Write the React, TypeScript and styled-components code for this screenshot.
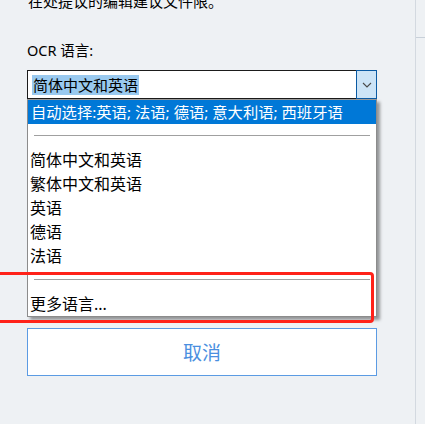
import React from "react";
import styled, { createGlobalStyle } from "styled-components";

const Global = createGlobalStyle`
  html, body {
    margin: 0;
    padding: 0;
    background: #eef1f4;
    overflow: hidden;
  }
  body {
    font-family: "Noto Sans", "Noto Sans CJK SC", sans-serif;
    color: #000;
  }
`;

const Page = styled.div`
  position: relative;
  display: flex;
  width: 425px;
  height: 424px;
  overflow: hidden;
  background: #eef1f4;
`;

const Panel = styled.div`
  box-sizing: border-box;
  width: 416px;
  height: 100%;
  padding: 0 38px 0 27px;
  border-right: 1px solid #d3d9e0;
  display: flex;
  flex-direction: column;
`;

const SideStrip = styled.div`
  flex: 1;
  display: flex;
  flex-direction: column;
`;

const SideRule = styled.div`
  margin-top: 37px;
  height: 1px;
  background: #c8d0d9;
`;

const Intro = styled.p`
  margin: -9px 0 0 1px;
  font-size: 15px;
  line-height: 20px;
  white-space: nowrap;
`;

const Label = styled.div`
  margin-top: 29px;
  font-size: 14.5px;
  line-height: 20px;
`;

const Combo = styled.div`
  margin-top: 10px;
  display: flex;
  height: 29px;
`;

const Field = styled.div`
  flex: 1;
  box-sizing: border-box;
  border: 1px solid #1b1b1b;
  border-right: none;
  background: #fff;
  display: flex;
  align-items: center;
  padding-left: 4px;
  font-size: 15px;
`;

const Selected = styled.span`
  background: #99c9ef;
  line-height: 20px;
  padding: 0 1px;
`;

const ArrowBtn = styled.div`
  box-sizing: border-box;
  width: 21px;
  border: 1px solid #0a5aa3;
  background: #cce4f7;
  display: flex;
  align-items: center;
  justify-content: center;
`;

const List = styled.div`
  box-sizing: border-box;
  border: 1px solid #8c8c8c;
  border-top-color: #9a9a9a;
  background: #fff;
  box-shadow: 3px 3px 3px rgba(0, 0, 0, 0.38);
  position: relative;
  z-index: 1;
`;

const Item = styled.div<{ $active?: boolean }>`
  height: 24px;
  line-height: 24px;
  padding-left: ${(p) => (p.$active ? "3px" : "2px")};
  font-size: ${(p) => (p.$active ? "15.3px" : "16px")};
  white-space: nowrap;
  background: ${(p) => (p.$active ? "#0078d7" : "transparent")};
  color: ${(p) => (p.$active ? "#fff" : "#000")};
`;

const SepRow = styled.div`
  height: 24px;
  display: flex;
  align-items: center;
  padding: 0 6px;
`;

const SepLine = styled.div`
  flex: 1;
  height: 1px;
  background: #a0a0a0;
  margin-top: -1px;
`;

const CancelBtn = styled.button`
  margin-top: 11px;
  box-sizing: border-box;
  width: 100%;
  height: 48px;
  border: 1px solid #5b9be3;
  background: #fff;
  color: #4a8fe0;
  font-family: "Noto Sans CJK SC", sans-serif;
  font-size: 19px;
  padding: 0 0 2px;
  cursor: pointer;
`;

const Annotation = styled.div`
  position: absolute;
  left: -6px;
  top: 272px;
  width: 380px;
  height: 51px;
  box-sizing: border-box;
  border: 3px solid #ff2219;
  border-radius: 4px;
  pointer-events: none;
  z-index: 2;
`;

const items = ["简体中文和英语", "繁体中文和英语", "英语", "德语", "法语"];

export default function App() {
  return (
    <>
      <Global />
      <Page>
        <Panel>
          <Intro>在处提议的编辑建议文件限。</Intro>
          <Label>OCR 语言:</Label>
          <Combo>
            <Field>
              <Selected>简体中文和英语</Selected>
            </Field>
            <ArrowBtn>
              <svg width="10" height="6" viewBox="0 0 10 6">
                <path d="M1 1 L5 5 L9 1" fill="none" stroke="#4a4a4a" strokeWidth="1.1" />
              </svg>
            </ArrowBtn>
          </Combo>
          <List>
            <Item $active>自动选择:英语; 法语; 德语; 意大利语; 西班牙语</Item>
            <SepRow>
              <SepLine />
            </SepRow>
            {items.map((t) => (
              <Item key={t}>{t}</Item>
            ))}
            <SepRow>
              <SepLine />
            </SepRow>
            <Item>更多语言...</Item>
          </List>
          <CancelBtn>取消</CancelBtn>
        </Panel>
        <SideStrip>
          <SideRule />
        </SideStrip>
        <Annotation />
      </Page>
    </>
  );
}
